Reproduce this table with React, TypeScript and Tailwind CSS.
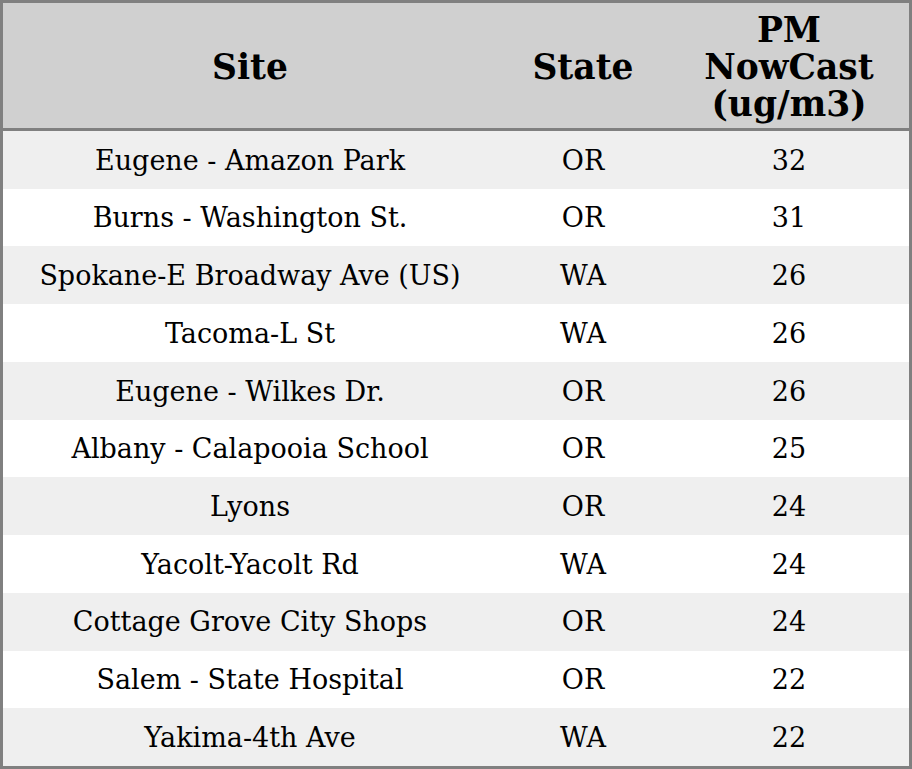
import React from "react";

const rows: [string, string, string][] = [
  ["Eugene - Amazon Park", "OR", "32"],
  ["Burns - Washington St.", "OR", "31"],
  ["Spokane-E Broadway Ave (US)", "WA", "26"],
  ["Tacoma-L St", "WA", "26"],
  ["Eugene - Wilkes Dr.", "OR", "26"],
  ["Albany - Calapooia School", "OR", "25"],
  ["Lyons", "OR", "24"],
  ["Yacolt-Yacolt Rd", "WA", "24"],
  ["Cottage Grove City Shops", "OR", "24"],
  ["Salem - State Hospital", "OR", "22"],
  ["Yakima-4th Ave", "WA", "22"],
];

export default function App() {
  return (
    <div
      className="w-[912px] h-[769px] border-[3px] border-[#808080] bg-white text-black flex flex-col"
      style={{ fontFamily: '"DejaVu Serif", serif' }}
    >
      <div className="grid grid-cols-[494px_172px_240px] h-[128px] pt-[4px] bg-[#d0d0d0] border-b-[3px] border-[#808080] box-border shrink-0 font-bold text-[34.5px] leading-[37px]">
        <div className="flex items-center justify-center text-center">Site</div>
        <div className="flex items-center justify-center text-center">State</div>
        <div className="flex items-center justify-center text-center">
          PM
          <br />
          NowCast
          <br />
          (ug/m3)
        </div>
      </div>
      <div className="flex-1 flex flex-col">
        {rows.map((r, i) => (
          <div
            key={i}
            className={
              "flex-1 grid grid-cols-[494px_172px_240px] items-center pt-[2px] text-[27px] text-center " +
              (i % 2 === 0 ? "bg-[#efefef]" : "bg-white")
            }
          >
            <div>{r[0]}</div>
            <div>{r[1]}</div>
            <div>{r[2]}</div>
          </div>
        ))}
      </div>
    </div>
  );
}
